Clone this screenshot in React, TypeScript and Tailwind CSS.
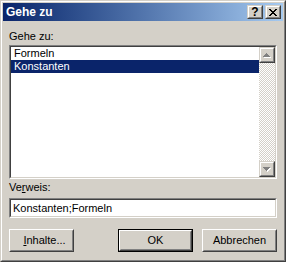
import * as React from "react"

const raised =
  "border border-t-[#d4d0c8] border-l-[#d4d0c8] border-r-[#404040] border-b-[#404040]"
const raisedInner =
  "border border-t-white border-l-white border-r-[#808080] border-b-[#808080]"
const sunken =
  "border border-t-[#808080] border-l-[#808080] border-r-white border-b-white"
const sunkenInner =
  "border border-t-[#404040] border-l-[#404040] border-r-[#d4d0c8] border-b-[#d4d0c8]"

const items = ["Formeln", "Konstanten"]

function CloseGlyph() {
  const rows = ["##....##", ".##..##.", "..####..", "...##...", "..####..", ".##..##.", "##....##"]
  return (
    <svg width="8" height="7" viewBox="0 0 8 7" shapeRendering="crispEdges">
      {rows.map((row, y) =>
        row.split("").map((c, x) =>
          c === "#" ? <rect key={`${x}-${y}`} x={x} y={y} width="1" height="1" fill="#000" /> : null
        )
      )}
    </svg>
  )
}

function ArrowGlyph({ down }: { down?: boolean }) {
  const rows = [
    [3, 1],
    [2, 3],
    [1, 5],
    [0, 7],
  ]
  const ordered = down ? [...rows].reverse() : rows
  return (
    <svg width="8" height="5" viewBox="0 0 8 5" shapeRendering="crispEdges">
      {ordered.map(([x, w], y) => (
        <rect key={`s${y}`} x={x + 1} y={y + 1} width={w} height="1" fill="#fff" />
      ))}
      {ordered.map(([x, w], y) => (
        <rect key={`g${y}`} x={x} y={y} width={w} height="1" fill="#808080" />
      ))}
    </svg>
  )
}

function CaptionButton({ children }: { children: React.ReactNode }) {
  return (
    <div className={`w-4 h-[14px] bg-[#d4d0c8] ${raised}`}>
      <div className={`h-full flex items-center justify-center ${raisedInner}`}>{children}</div>
    </div>
  )
}

function ScrollButton({ down }: { down?: boolean }) {
  return (
    <div className={`w-4 h-4 bg-[#d4d0c8] ${raised}`}>
      <div className={`h-full flex items-center justify-center ${raisedInner}`}>
        <ArrowGlyph down={down} />
      </div>
    </div>
  )
}

function PushButton({
  label,
  isDefault,
  className = "",
}: {
  label: React.ReactNode
  isDefault?: boolean
  className?: string
}) {
  const face = (
    <div className={`h-full bg-[#d4d0c8] ${isDefault ? "" : "border border-t-white border-l-white border-r-[#404040] border-b-[#404040]"}`}>
      <div
        className={`h-full flex items-center justify-center ${
          isDefault
            ? "border border-t-white border-l-white border-r-[#404040] border-b-[#404040]"
            : "border border-t-[#d4d0c8] border-l-[#d4d0c8] border-r-[#808080] border-b-[#808080]"
        } ${className}`}
      >
        {isDefault ? (
          <div className="h-full w-full flex items-center justify-center border border-transparent border-r-[#808080] border-b-[#808080]">
            {label}
          </div>
        ) : (
          label
        )}
      </div>
    </div>
  )
  return isDefault ? <div className="w-[75px] h-[23px] border border-black">{face}</div> : face
}

export default function App() {
  const [selected, setSelected] = React.useState(1)

  return (
    <div
      className={`w-[286px] h-[262px] bg-[#d4d0c8] ${raised} font-['Liberation_Sans',Arial,sans-serif] text-[11px] leading-[13px] text-black`}
    >
      <div className={`h-full flex flex-col p-px ${raisedInner}`}>
        {/* caption */}
        <div className="h-[18px] shrink-0 flex items-center gap-[2px] pl-[3px] pr-[2px] bg-linear-to-r from-[#0a246a] to-[#a6caf0]">
          <span className="flex-1 font-bold text-[12px] text-white">Gehe zu</span>
          <CaptionButton>
            <span className="font-bold text-[12px] leading-none -mt-px">?</span>
          </CaptionButton>
          <CaptionButton>
            <CloseGlyph />
          </CaptionButton>
        </div>

        {/* body */}
        <div className="flex-1 flex flex-col px-[6px] pt-[9px]">
          <div className="mb-[2px]">Gehe zu:</div>

          <div className={`h-[134px] ${sunken}`}>
            <div className={`h-full flex bg-white ${sunkenInner}`}>
              <ul className="flex-1">
                {items.map((item, i) => (
                  <li
                    key={item}
                    onClick={() => setSelected(i)}
                    className={`h-[13px] px-[3px] ${
                      i === selected ? "bg-[#0a246a] text-white" : ""
                    }`}
                  >
                    {item}
                  </li>
                ))}
              </ul>
              <div className="w-4 flex flex-col">
                <ScrollButton />
                <div className="flex-1 bg-[image:repeating-conic-gradient(#d4d0c8_0_25%,#ffffff_0_50%)] bg-[length:2px_2px]" />
                <ScrollButton down />
              </div>
            </div>
          </div>

          <div className="mt-[2px]">
            Ve<span className="underline">r</span>weis:
          </div>

          <div className={`mt-[4px] h-5 ${sunken}`}>
            <div className={`h-full flex items-center bg-white px-[2px] ${sunkenInner}`}>
              Konstanten;Formeln
            </div>
          </div>

          <div className="mt-[11px] flex justify-between">
            <div className="w-[65px] h-[23px]">
              <PushButton
                className="pl-[6px]"
                label={
                  <span>
                    <span className="underline">I</span>nhalte...
                  </span>
                }
              />
            </div>
            <div className="flex gap-[9px]">
              <PushButton isDefault label="OK" />
              <div className="w-[75px] h-[23px]">
                <PushButton label="Abbrechen" />
              </div>
            </div>
          </div>
        </div>
      </div>
    </div>
  )
}
